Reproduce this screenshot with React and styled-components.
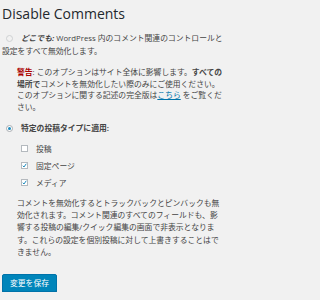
import React from 'react';
import styled, { createGlobalStyle } from 'styled-components';

const GlobalStyle = createGlobalStyle`
  html, body {
    margin: 0;
    padding: 0;
    background: #f1f1f1;
  }
  body {
    font-family: "Open Sans", "Noto Sans CJK JP", sans-serif;
    color: #444;
  }
`;

const Page = styled.div`
  padding: 0 2px;
  width: 226px;
`;

const Title = styled.h1`
  margin: 0;
  padding-top: 5px;
  font-size: 14px;
  font-weight: 400;
  line-height: 18px;
  color: #23282d;
  white-space: nowrap;
`;

const Para = styled.p`
  margin: ${(p) => p.$mt || 0}px 0 0;
  padding-left: ${(p) => p.$indent || 0}px;
  font-size: 7.8px;
  line-height: ${(p) => p.$lh || 12}px;
  white-space: nowrap;
`;

const Radio = styled.span`
  display: inline-block;
  box-sizing: border-box;
  width: 7px;
  height: 7px;
  margin: 0 8px 0 4px;
  vertical-align: -1px;
  border: 1px solid ${(p) => (p.$checked ? '#a9adb1' : '#cfd1d3')};
  border-radius: 50%;
  background: ${(p) => (p.$checked ? '#fff' : '#f2f2f2')};
  position: relative;

  &::after {
    content: '';
    display: ${(p) => (p.$checked ? 'block' : 'none')};
    position: absolute;
    left: 1px;
    top: 1px;
    width: 3px;
    height: 3px;
    border-radius: 50%;
    background: #1e8cbe;
  }
`;

const Strong = styled.strong`
  font-weight: 700;
  font-style: ${(p) => (p.$italic ? 'italic' : 'normal')};
  color: ${(p) => p.$color || 'inherit'};
`;

const Link = styled.a`
  color: #0073aa;
  text-decoration: underline;
`;

const RadioRow = styled.div`
  margin-top: ${(p) => p.$mt || 0}px;
  font-size: 7.8px;
  line-height: 13px;
  display: flex;
  align-items: center;
  white-space: nowrap;
`;

const CheckList = styled.div`
  margin-top: 5px;
  padding-left: 19px;
  display: flex;
  flex-direction: column;
`;

const CheckRow = styled.label`
  height: 17px;
  display: flex;
  align-items: center;
  gap: 8px;
  font-size: 7.8px;
`;

const Box = styled.span`
  box-sizing: border-box;
  width: 7px;
  height: 7px;
  border: 1px solid #b4b9be;
  background: #fff;
  display: flex;
  align-items: center;
  justify-content: center;
`;

const SaveButton = styled.button`
  margin-top: 16px;
  height: 18px;
  padding: 0 7px;
  background: #0085ba;
  border: 1px solid #0073aa;
  border-radius: 2px;
  box-shadow: 0 1px 0 #006799;
  color: #fff;
  font-family: "Open Sans", "Noto Sans CJK JP", sans-serif;
  font-size: 7.8px;
  line-height: 16px;
  cursor: pointer;
`;

const Check = ({ checked }) => (
  <Box>
    {checked && (
      <svg width="5" height="5" viewBox="0 0 10 10">
        <path d="M1.5 5.5 L4 8 L8.5 1.5" fill="none" stroke="#1e8cbe" strokeWidth="2" />
      </svg>
    )}
  </Box>
);

const types = [
  { label: '投稿', checked: false },
  { label: '固定ページ', checked: true },
  { label: 'メディア', checked: true },
];

export default function App() {
  return (
    <Page>
      <GlobalStyle />
      <Title>Disable Comments</Title>

      <Para $mt={9} $lh={13}>
        <Radio />
        <Strong $italic>どこでも:</Strong> WordPress 内のコメント関連のコントロールと
        <br />
        設定をすべて無効化します。
      </Para>

      <Para $mt={9} $lh={11.7} $indent={15}>
        <Strong $color="#a00">警告</Strong>: このオプションはサイト全体に影響します。<Strong>すべての</Strong>
        <br />
        <Strong>場所で</Strong>コメントを無効化したい際のみにご使用ください。
        <br />
        このオプションに関する記述の完全版は<Link href="#">こちら</Link> をご覧くだ
        <br />
        さい。
      </Para>

      <RadioRow $mt={8}>
        <Radio $checked />
        <Strong>特定の投稿タイプに適用:</Strong>
      </RadioRow>

      <CheckList>
        {types.map((t) => (
          <CheckRow key={t.label}>
            <Check checked={t.checked} />
            {t.label}
          </CheckRow>
        ))}
      </CheckList>

      <Para $mt={6} $lh={12.3} $indent={15}>
        コメントを無効化するとトラックバックとピンバックも無
        <br />
        効化されます。コメント関連のすべてのフィールドも、影
        <br />
        響する投稿の編集/クイック編集の画面で非表示となりま
        <br />
        す。これらの設定を個別投稿に対して上書きすることはで
        <br />
        きません。
      </Para>

      <SaveButton>変更を保存</SaveButton>
    </Page>
  );
}
